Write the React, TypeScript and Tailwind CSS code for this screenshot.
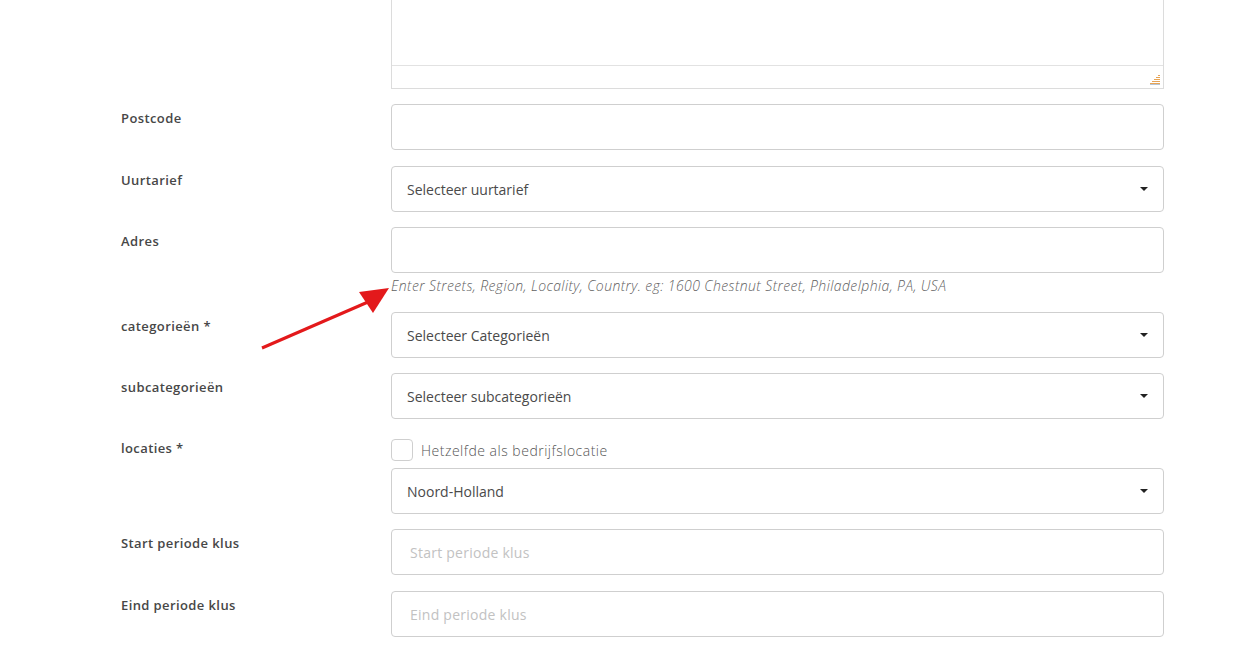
import React from "react";

const labelCls =
  "w-[270px] shrink-0 pt-[5px] text-[13px] leading-[18px] font-semibold tracking-[0.4px] text-[#474747] [font-family:'Open_Sans',sans-serif]";

function Caret() {
  return (
    <svg className="w-[8px] h-[4px]" viewBox="0 0 8 4">
      <path d="M0 0h8L4 4z" fill="#222" />
    </svg>
  );
}

function TextInput({ placeholder }: { placeholder?: string }) {
  return (
    <div className="h-[46px] w-full rounded-[4px] border border-[#cfcfcf] bg-white flex items-center px-[18px] text-[14px] tracking-[0.25px] text-[#c2c2c2]">
      {placeholder}
    </div>
  );
}

function Select({ value }: { value: string }) {
  return (
    <div className="h-[46px] w-full rounded-[4px] border border-[#cfcfcf] bg-white flex items-center justify-between pl-[15px] pr-[15px] text-[14px] text-[#4a4a4a]">
      <span>{value}</span>
      <Caret />
    </div>
  );
}

function Row({ label, children, className = "mb-[16px]" }: { label: string; children: React.ReactNode; className?: string }) {
  return (
    <div className={`flex ${className}`}>
      <div className={labelCls}>{label}</div>
      <div className="w-[773px]">{children}</div>
    </div>
  );
}

function ResizeGrip() {
  return (
    <svg className="w-[10px] h-[10px]" viewBox="0 0 10 10">
      <rect x="8" y="0" width="2" height="1" fill="#e8a455" />
      <rect x="6" y="2" width="4" height="1" fill="#e8a455" />
      <rect x="4" y="4" width="6" height="1" fill="#e8a455" />
      <rect x="2" y="6" width="8" height="1" fill="#e8a455" />
      <rect x="0" y="8" width="10" height="1" fill="#e8a455" />
      <rect x="0" y="9" width="10" height="1" fill="#b9c7d6" />
    </svg>
  );
}

export default function App() {
  return (
    <div className="relative w-[1257px] h-[648px] overflow-hidden bg-white pl-[121px] [font-family:'Open_Sans',sans-serif]">
      <div className="flex mb-[15px]">
        <div className="w-[270px] shrink-0" />
        <div className="w-[773px] border border-t-0 border-[#dcdcdc]">
          <div className="h-[66px] border-b border-[#e2e2e2]" />
          <div className="h-[22px] flex items-end justify-end pr-[3px] pb-[3px]">
            <ResizeGrip />
          </div>
        </div>
      </div>

      <Row label="Postcode">
        <TextInput />
      </Row>
      <Row label="Uurtarief" className="mb-[15px]">
        <Select value="Selecteer uurtarief" />
      </Row>
      <Row label="Adres">
        <TextInput />
        <div className="h-[23px] pt-[3px] text-[14px] leading-[20px] italic font-light tracking-[0.4px] text-[#5f5f5f] whitespace-nowrap">
          Enter Streets, Region, Locality, Country. eg: 1600 Chestnut Street, Philadelphia, PA, USA
        </div>
      </Row>
      <Row label="categorieën *" className="mb-[15px]">
        <Select value="Selecteer Categorieën" />
      </Row>
      <Row label="subcategorieën" className="mb-[15px]">
        <Select value="Selecteer subcategorieën" />
      </Row>
      <Row label="locaties *" className="mb-[15px]">
        <div className="flex items-center gap-[8px] mt-[5px] mb-[7px]">
          <div className="w-[22px] h-[22px] rounded-[4px] border border-[#cfcfcf] bg-white" />
          <span className="text-[14px] font-light text-[#555] tracking-[0.5px]">Hetzelfde als bedrijfslocatie</span>
        </div>
        <Select value="Noord-Holland" />
      </Row>
      <Row label="Start periode klus">
        <TextInput placeholder="Start periode klus" />
      </Row>
      <Row label="Eind periode klus">
        <TextInput placeholder="Eind periode klus" />
      </Row>

      <svg className="absolute left-0 top-0 pointer-events-none" width="1257" height="648">
        <line x1="262" y1="348" x2="368" y2="302" stroke="#e3191b" strokeWidth="3" />
        <path d="M389 288L359 292L373 313Z" fill="#e3191b" />
      </svg>
    </div>
  );
}
